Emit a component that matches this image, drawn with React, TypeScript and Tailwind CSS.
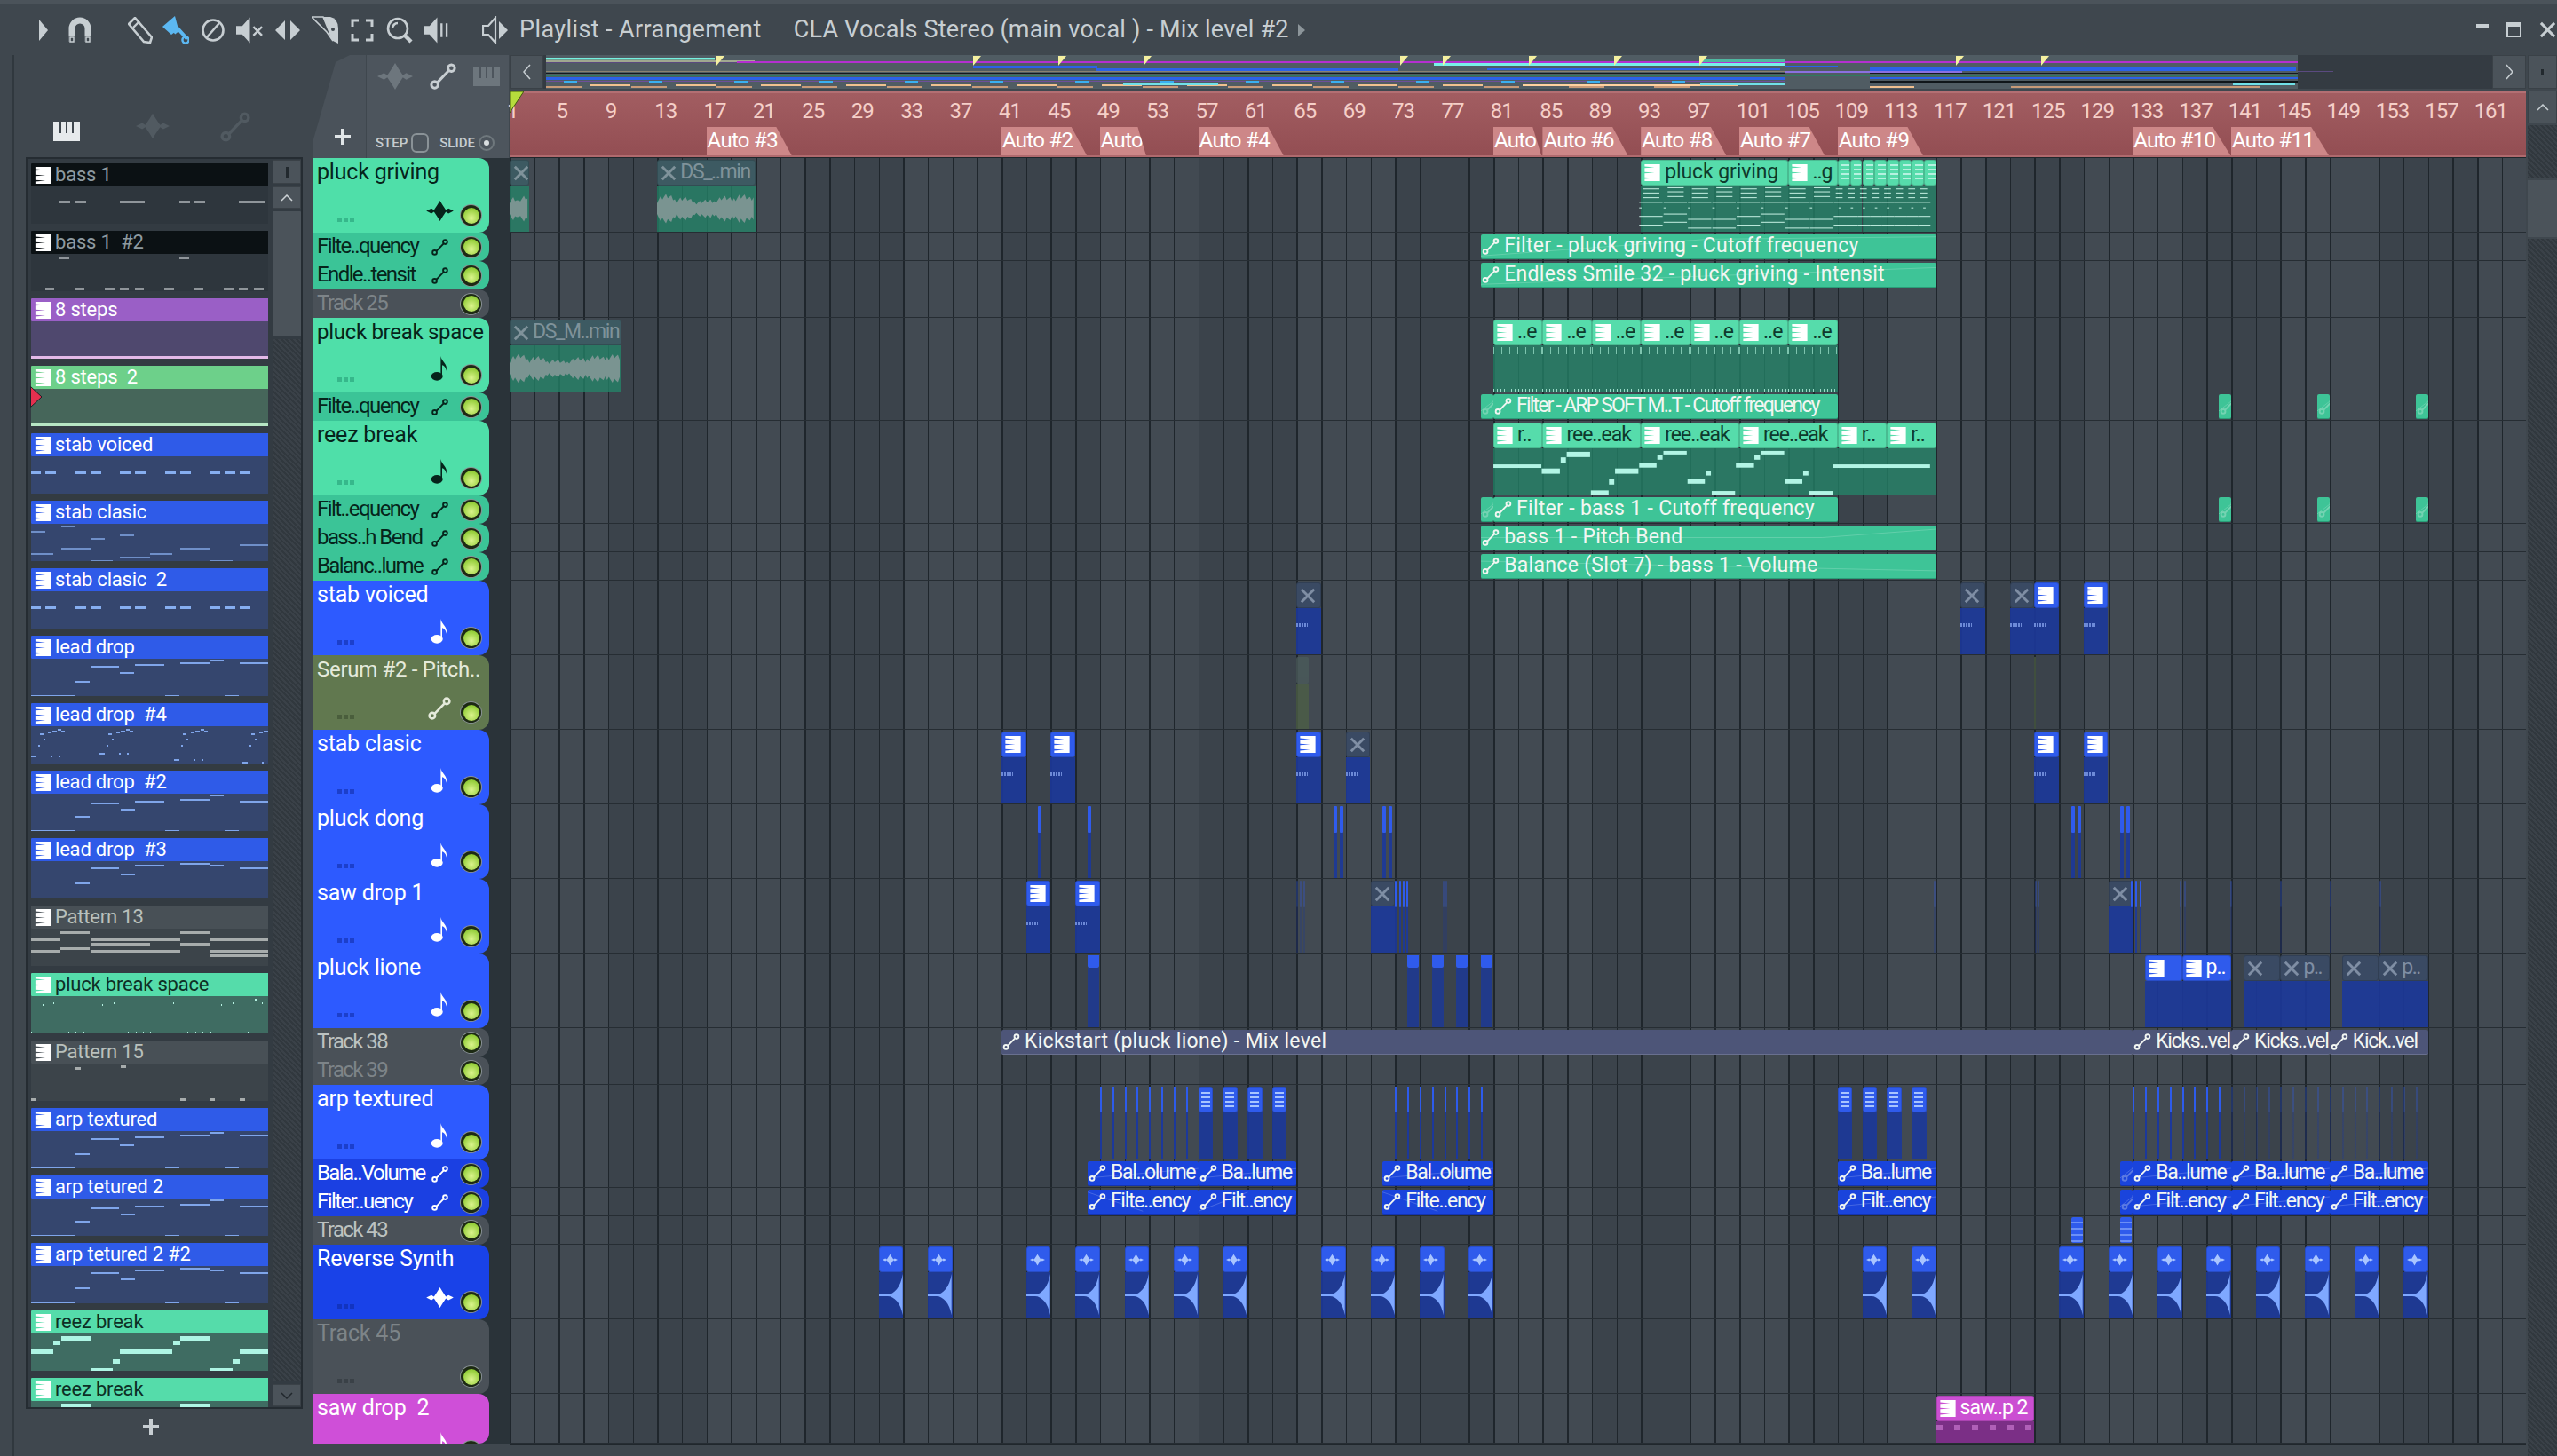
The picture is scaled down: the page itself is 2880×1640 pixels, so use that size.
import type { ReactNode } from "react";

const BAR = 13.85;
const GRID_X = 574;

type Tone = "green" | "blue" | "grey" | "mag";
type Note = [number, number, number, number?];

/* ---------- small drawings ---------- */

function PatIcon({ className = "w-[20px] h-[22px]" }: { className?: string }) {
  return (
    <svg viewBox="0 0 20 22" className={`shrink-0 fill-white ${className}`}>
      <path d="M0 0H20V22H0V19L13 18L0 17V12L13 11L0 10V5L13 4L0 3Z" />
    </svg>
  );
}

function WaveIcon({ className = "" }: { className?: string }) {
  return (
    <svg viewBox="0 0 32 24" className={className} fill="currentColor">
      <path d="M0 12L6 9L9 11L13 5L16 0L19 5L23 11L26 9L32 12L26 15L23 13L19 19L16 24L13 19L9 13L6 15Z" />
    </svg>
  );
}

function NoteIcon({ className = "" }: { className?: string }) {
  return (
    <svg viewBox="0 0 20 30" className={className} fill="currentColor">
      <ellipse cx="7" cy="24.5" rx="7" ry="5.2" />
      <path d="M11.5 25V0C12.5 7 20 9 18.5 18C17.5 13 15 11.5 13.2 11V25Z" />
    </svg>
  );
}

function AutoIcon({ className = "" }: { className?: string }) {
  return (
    <svg viewBox="0 0 24 24" className={className} fill="none" stroke="currentColor" strokeWidth="2.4">
      <circle cx="4.5" cy="19.5" r="3" />
      <circle cx="19.5" cy="4.5" r="3" />
      <path d="M7 17.5L17 7" />
    </svg>
  );
}

function PianoIcon({ className = "" }: { className?: string }) {
  return (
    <svg viewBox="0 0 30 22" className={className} fill="currentColor">
      <path d="M0 0H7V13H9V0H14V13H16V0H21V13H23V0H30V22H0Z" />
    </svg>
  );
}

function CrossIcon({ className = "" }: { className?: string }) {
  return (
    <svg viewBox="0 0 20 20" className={className} fill="none" stroke="currentColor" strokeWidth="3.2">
      <path d="M2 2L18 18M18 2L2 18" />
    </svg>
  );
}

function Led() {
  return (
    <span className="flex h-[23px] w-[23px] shrink-0 items-center justify-center rounded-full bg-[#1d2a14] ring-1 ring-[#8a9296]">
      <span className="h-[18px] w-[18px] rounded-full bg-[radial-gradient(circle_at_50%_65%,#dcf58e,#8fcb34_75%)]" />
    </span>
  );
}

function ToolIcons() {
  return (
    <>
      <svg viewBox="0 0 10 24" className="ml-[44px] h-[24px] w-[10px] fill-[#c7ced2]">
        <path d="M0 0L10 12L0 24Z" />
      </svg>
      <svg viewBox="0 0 28 30" className="ml-[22px] h-[30px] w-[28px]">
        <path d="M5 28V13a9 9 0 0 1 18 0V28" fill="none" stroke="#c7ced2" strokeWidth="7" />
        <path d="M1.5 22h7v6h-7zM19.5 22h7v6h-7z" fill="#3f474e" />
        <path d="M3 23h4v5H3zM21 23h4v5h-4z" fill="none" stroke="#c7ced2" strokeWidth="1.5" />
      </svg>
      <svg viewBox="0 0 28 30" className="ml-[40px] h-[30px] w-[28px]">
        <path d="M1 8L8 1L27 23L25 29L18 28Z" fill="none" stroke="#c7ced2" strokeWidth="2.6" />
        <path d="M6 12L13 5" stroke="#c7ced2" strokeWidth="2.4" />
      </svg>
      <svg viewBox="0 0 30 32" className="ml-[11px] h-[32px] w-[30px]">
        <path d="M0 12L14 0L18 15L10 21Z" fill="#5cb8f2" />
        <path d="M13 19L18 15L28 26" fill="none" stroke="#5cb8f2" strokeWidth="4" />
        <circle cx="26" cy="27" r="3.6" fill="none" stroke="#5cb8f2" strokeWidth="2.4" />
      </svg>
      <svg viewBox="0 0 26 26" className="ml-[14px] h-[26px] w-[26px]" fill="none" stroke="#c7ced2" strokeWidth="2.6">
        <circle cx="13" cy="13" r="11.5" />
        <path d="M6 21L20 5" />
      </svg>
      <svg viewBox="0 0 32 32" className="ml-[13px] h-[32px] w-[31px]">
        <path d="M0 11H7L16 1V31L7 21H0Z" fill="#c7ced2" />
        <path d="M20 12L30 22M30 12L20 22" stroke="#c7ced2" strokeWidth="2.4" />
      </svg>
      <svg viewBox="0 0 30 26" className="ml-[12px] h-[26px] w-[30px] fill-[#c7ced2]">
        <path d="M12 2V24L1 13ZM18 2V24L29 13Z" />
      </svg>
      <svg viewBox="0 0 30 32" className="ml-[12px] h-[32px] w-[30px]">
        <path d="M0 1H13L24 28L17 18Z" fill="none" stroke="#c7ced2" strokeWidth="1.6" />
        <path d="M14 1H21Q30 3 30 14V31L24 28L14 3Z" fill="#c7ced2" />
        <circle cx="24" cy="15" r="2" fill="#3f474e" />
      </svg>
      <svg viewBox="0 0 26 26" className="ml-[14px] h-[26px] w-[26px]" fill="none" stroke="#c7ced2" strokeWidth="3">
        <path d="M9 2H2V9M17 2H24V9M9 24H2V17M17 24H24V17" />
      </svg>
      <svg viewBox="0 0 30 30" className="ml-[14px] h-[30px] w-[30px]" fill="none" stroke="#c7ced2" strokeWidth="2.6">
        <circle cx="13" cy="13" r="11" />
        <path d="M7 13A6 6 0 0 1 13 7" />
        <path d="M21 21L28 28" strokeWidth="4.4" />
      </svg>
      <svg viewBox="0 0 30 32" className="ml-[12px] h-[32px] w-[29px]">
        <path d="M0 11H7L16 1V31L7 21H0Z" fill="#c7ced2" />
        <path d="M21 8V24M27 8V24" stroke="#c7ced2" strokeWidth="2.4" />
      </svg>
      <svg viewBox="0 0 30 32" className="ml-[37px] h-[32px] w-[30px]">
        <path d="M1 11H7L15 2V30L7 21H1Z" fill="none" stroke="#c7ced2" strokeWidth="2.2" />
        <path d="M19 6L29 16L19 26Z" fill="#c7ced2" />
      </svg>
    </>
  );
}

/* ---------- picker ---------- */

const LEAD: Note[] = [
  [67, 99, 8], [50, 66, 25], [100, 116, 15], [117, 150, 6], [168, 201, 4], [201, 217, 1],
  [235, 268, 4], [0, 16, 41], [16, 50, 41], [151, 167, 41], [218, 234, 41],
];
const LEAD2: Note[] = [
  [67, 99, 10], [50, 66, 25], [101, 117, 17], [117, 150, 8], [168, 201, 6], [201, 217, 1],
  [235, 268, 8], [0, 16, 41], [16, 50, 41], [151, 167, 41], [218, 234, 41],
];
const LEAD3: Note[] = [
  [67, 99, 7], [50, 66, 24], [101, 117, 14], [117, 150, 4], [168, 201, 2], [201, 217, 4],
  [235, 268, 7], [0, 16, 41], [16, 50, 41], [151, 167, 41], [218, 234, 41],
];
const DOTS: Note[] = [0, 77, 161, 238].flatMap((o, i) =>
  (
    [
      [10, 14, 8], [19, 23, 6], [24, 29, 5], [30, 34, 3], [34, 38, 5], [14, 16, 14], [8, 10, 21],
      [0, 6, 33], [22, 24, 33], [31, 33, 33],
    ] as Note[]
  ).map((n) => [n[0] + o, Math.min(n[1] + o, 270), n[2] + (n[2] > 25 ? [0, -3, 4, 7][i] : 0), 2] as Note),
);
const STAB: Note[] = [
  [0, 11, 17, 3], [16, 28, 17, 3], [50, 62, 17, 3], [67, 79, 17, 3], [100, 112, 17, 3], [117, 129, 17, 3],
  [151, 163, 17, 3], [168, 180, 17, 3], [202, 213, 17, 3], [218, 230, 17, 3], [235, 247, 17, 3],
];
const REEZ: Note[] = [
  [34, 67, 3, 5], [25, 33, 8, 5], [0, 25, 18, 5], [67, 92, 39, 5], [92, 100, 29, 5], [100, 159, 18, 5],
  [160, 168, 8, 5], [168, 201, 3, 5], [201, 227, 39, 5], [227, 235, 29, 5], [235, 268, 18, 5],
];

const PICKER: { name: string; head: string; body: string; note: string; notes: Note[]; line?: string }[] = [
  {
    name: "bass 1", head: "bg-[#0b1114] text-[#8e9aa0]", body: "bg-[#2e363d]", note: "fill-[#8f959a]",
    notes: [[32, 44, 16, 3], [50, 62, 16, 3], [100, 128, 16, 3], [167, 179, 16, 3], [184, 196, 16, 3], [234, 263, 16, 3]],
  },
  {
    name: "bass 1  #2", head: "bg-[#0b1114] text-[#8e9aa0]", body: "bg-[#2e363d]", note: "fill-[#8f959a]",
    notes: [
      [32, 43, 3, 3], [167, 178, 3, 3], [16, 26, 38, 3], [50, 60, 38, 3], [83, 94, 38, 3], [100, 110, 38, 3], [117, 127, 38, 3],
      [150, 161, 38, 3], [184, 194, 38, 3], [217, 228, 38, 3], [234, 244, 38, 3], [251, 262, 38, 3],
    ],
  },
  { name: "8 steps", head: "bg-[#9a5fc6] text-white", body: "bg-[#4f486e]", note: "", notes: [], line: "bg-[#e3b9e8]" },
  { name: "8 steps  2", head: "bg-[#6dd08a] text-white", body: "bg-[#46665a]", note: "", notes: [], line: "bg-[#b7e6c4]" },
  { name: "stab voiced", head: "bg-[#2f5be8] text-white", body: "bg-[#35466e]", note: "fill-[#86aef0]", notes: STAB },
  {
    name: "stab clasic", head: "bg-[#2f5be8] text-white", body: "bg-[#35466e]", note: "fill-[#6f8fc8]",
    notes: [
      [0, 25, 33], [34, 67, 27], [67, 92, 41], [100, 134, 37], [134, 159, 33], [168, 201, 27], [201, 227, 41, 3], [235, 268, 23],
      [0, 16, 8], [34, 50, 2], [67, 83, 16], [100, 116, 12],
    ],
  },
  { name: "stab clasic  2", head: "bg-[#2f5be8] text-white", body: "bg-[#35466e]", note: "fill-[#86aef0]", notes: STAB },
  { name: "lead drop", head: "bg-[#2f5be8] text-white", body: "bg-[#35466e]", note: "fill-[#7fa5ea]", notes: LEAD },
  { name: "lead drop  #4", head: "bg-[#2f5be8] text-white", body: "bg-[#35466e]", note: "fill-[#7fa5ea]", notes: DOTS },
  { name: "lead drop  #2", head: "bg-[#2f5be8] text-white", body: "bg-[#35466e]", note: "fill-[#7fa5ea]", notes: LEAD2 },
  { name: "lead drop  #3", head: "bg-[#2f5be8] text-white", body: "bg-[#35466e]", note: "fill-[#7fa5ea]", notes: LEAD3 },
  {
    name: "Pattern 13", head: "bg-[#485056] text-[#b9c0bc]", body: "bg-[#3c444a]", note: "fill-[#a7acac]",
    notes: [
      [0, 33, 11, 3], [33, 66, 3, 3], [33, 66, 21, 3], [0, 33, 24, 3], [67, 134, 11, 3], [67, 134, 16, 3], [67, 134, 24, 3],
      [134, 168, 11, 3], [134, 168, 24, 3], [168, 201, 3, 3], [168, 201, 16, 3], [202, 268, 11, 3], [202, 268, 24, 3],
      [202, 268, 29, 3], [0, 268, 42, 3],
    ],
  },
  {
    name: "pluck break space", head: "bg-[#55dcaa] text-[#0d2f25]", body: "bg-[#3f6c62]", note: "fill-[#b6f1e2]",
    notes: [
      [13, 14, 9], [25, 26, 7], [80, 81, 9], [93, 94, 7], [147, 148, 9], [160, 161, 7], [214, 215, 9], [227, 228, 7], [252, 254, 3], [260, 261, 7],
      [0, 1, 40], [42, 43, 40], [50, 51, 40], [59, 60, 40], [67, 68, 40], [109, 110, 40], [118, 119, 40], [126, 127, 40], [134, 135, 40],
      [176, 177, 40], [185, 186, 40], [193, 194, 40], [202, 203, 40], [244, 245, 40],
    ],
  },
  {
    name: "Pattern 15", head: "bg-[#485056] text-[#b9c0bc]", body: "bg-[#3c444a]", note: "fill-[#a7acac]",
    notes: [[50, 56, 4, 3], [101, 107, 2, 3], [0, 6, 39, 3], [168, 174, 39, 3], [201, 207, 39, 3], [235, 241, 39, 3]],
  },
  { name: "arp textured", head: "bg-[#2f5be8] text-white", body: "bg-[#35466e]", note: "fill-[#7fa5ea]", notes: LEAD },
  { name: "arp tetured 2", head: "bg-[#2f5be8] text-white", body: "bg-[#35466e]", note: "fill-[#7fa5ea]", notes: LEAD2 },
  { name: "arp tetured 2 #2", head: "bg-[#2f5be8] text-white", body: "bg-[#35466e]", note: "fill-[#7fa5ea]", notes: LEAD3 },
  { name: "reez break", head: "bg-[#55dcaa] text-[#0d2f25]", body: "bg-[#3f6c62]", note: "fill-[#aef5e4]", notes: REEZ },
  { name: "reez break", head: "bg-[#55dcaa] text-[#0d2f25]", body: "bg-[#3f6c62]", note: "fill-[#aef5e4]", notes: REEZ },
];

function Picker() {
  return (
    <div className="flex w-[336px] flex-col">
      <div className="flex h-[115px] items-end pb-[17px] text-[#e6eaec]">
        <PianoIcon className="ml-[44px] h-[24px] w-[30px]" />
        <WaveIcon className="ml-[63px] h-[36px] w-[38px] text-[#515a61]" />
        <AutoIcon className="ml-[57px] h-[34px] w-[34px] text-[#515a61]" />
      </div>
      <div className="ml-[13px] flex h-[1410px] w-[312px] gap-[5px] border-[2px] border-[#252c32] bg-[#333b42]">
        <div className="flex w-[271px] flex-col overflow-hidden pt-[5px] pl-[4px]">
          {PICKER.map((p, i) => (
            <div key={i} className="relative mb-[8px] h-[68px] w-[270px] shrink-0">
              <div className={`flex h-[26px] items-center gap-[4px] rounded-[1px] pl-[4px] text-[22px] whitespace-pre ${p.head}`}>
                <PatIcon className="h-[19px] w-[19px]" />
                <span className="pb-[1px] tracking-[-0.2px]">{p.name}</span>
              </div>
              <div className={`flex h-[42px] flex-col justify-end overflow-hidden ${p.body}`}>
                {p.notes.length > 0 && (
                  <svg viewBox="0 0 270 42" className={`h-[42px] w-[270px] ${p.note}`}>
                    {p.notes.map((n, j) => (
                      <rect key={j} x={n[0]} width={n[1] - n[0]} y={n[2]} height={n[3] ?? 2} />
                    ))}
                  </svg>
                )}
                {p.line && <span className={`h-[3px] ${p.line}`} />}
              </div>
              {i === 3 && (
                <svg viewBox="0 0 14 24" className="absolute top-[23px] -left-[1px] h-[24px] w-[14px] fill-[#e5304f] stroke-[#1d2226]">
                  <path d="M0.5 0.5L13 12L0.5 23.5Z" />
                </svg>
              )}
            </div>
          ))}
        </div>
        <div className="flex flex-1 flex-col gap-[3px] pt-[1px] pb-[1px]">
          <div className="flex h-[27px] items-center justify-center border border-[#3a4147] bg-[#4b535a]">
            <span className="h-[12px] w-[3px] bg-[#22292e]" />
          </div>
          <div className="flex h-[25px] items-center justify-center border border-[#3a4147] bg-[#4b535a] text-[#cdd3d6]">
            <svg viewBox="0 0 14 8" className="h-[8px] w-[14px]" fill="none" stroke="currentColor" strokeWidth="1.5"><path d="M1 7L7 1L13 7" /></svg>
          </div>
          <div className="h-[141px] rounded-[1px] bg-[#4b535a]" />
          <div className="flex-1 bg-[repeating-linear-gradient(45deg,#31383e_0,#31383e_2px,#3a4148_2px,#3a4148_4px)]" />
          <div className="flex h-[25px] items-center justify-center border border-[#3a4147] bg-[#4b535a] text-[#20272c]">
            <svg viewBox="0 0 14 8" className="h-[8px] w-[14px]" fill="none" stroke="currentColor" strokeWidth="1.5"><path d="M1 1L7 7L13 1" /></svg>
          </div>
        </div>
      </div>
      <div className="ml-[13px] flex w-[312px] pt-[11px] pl-[132px]">
        <svg viewBox="0 0 18 18" className="h-[18px] w-[18px] fill-[#c7ced2]"><path d="M7 0H11V7H18V11H11V18H7V11H0V7H7Z" /></svg>
      </div>
    </div>
  );
}

/* ---------- track headers ---------- */

type Row = { name: string; h: number; bg: string; fg: string; dots?: string; icon?: "wave" | "note" | "auto" };
const G = { bg: "bg-[#4fdfa9]", fg: "text-[#06241b]", dots: "bg-[#36b88b]" };
const GS = { bg: "bg-[#3bc497]", fg: "text-[#06241b]" };
const B = { bg: "bg-[#2d5aff]", fg: "text-white", dots: "bg-[#1c3fcb]" };
const BS = { bg: "bg-[#1b40e2]", fg: "text-white" };

const ROWS: Row[] = [
  { name: "pluck griving", h: 84, ...G, icon: "wave" },
  { name: "Filte..quency", h: 32, ...GS, icon: "auto" },
  { name: "Endle..tensit", h: 32, ...GS, icon: "auto" },
  { name: "Track 25", h: 32, bg: "bg-[#4a5158]", fg: "text-[#7d8488]" },
  { name: "pluck break space", h: 84, ...G, icon: "note" },
  { name: "Filte..quency", h: 32, ...GS, icon: "auto" },
  { name: "reez break", h: 84, ...G, icon: "note" },
  { name: "Filt..equency", h: 32, ...GS, icon: "auto" },
  { name: "bass..h Bend", h: 32, ...GS, icon: "auto" },
  { name: "Balanc..lume", h: 32, ...GS, icon: "auto" },
  { name: "stab voiced", h: 84, ...B, icon: "note" },
  { name: "Serum #2 - Pitch..", h: 84, bg: "bg-[#61784f]", fg: "text-[#e5eadb]", dots: "bg-[#4a5e3c]", icon: "auto" },
  { name: "stab clasic", h: 84, ...B, icon: "note" },
  { name: "pluck dong", h: 84, ...B, icon: "note" },
  { name: "saw drop 1", h: 84, ...B, icon: "note" },
  { name: "pluck lione", h: 84, ...B, icon: "note" },
  { name: "Track 38", h: 32, bg: "bg-[#4a5158]", fg: "text-[#bcc2c0]" },
  { name: "Track 39", h: 32, bg: "bg-[#4a5158]", fg: "text-[#7d8488]" },
  { name: "arp textured", h: 84, ...B, icon: "note" },
  { name: "Bala..Volume", h: 32, ...BS, icon: "auto" },
  { name: "Filter..uency", h: 32, ...BS, icon: "auto" },
  { name: "Track 43", h: 32, bg: "bg-[#4a5158]", fg: "text-[#bcc2c0]" },
  { name: "Reverse Synth", h: 84, bg: "bg-[#1942e8]", fg: "text-white", dots: "bg-[#1234c0]", icon: "wave" },
  { name: "Track 45", h: 84, bg: "bg-[#4a5158]", fg: "text-[#7d8488]", dots: "bg-[#3a4147]" },
  { name: "saw drop  2", h: 56, bg: "bg-[#cf4fd8]", fg: "text-white", dots: "bg-[#a83db0]", icon: "note" },
];

function RowIcon({ kind, big }: { kind?: Row["icon"]; big: boolean }) {
  if (kind === "wave") return <WaveIcon className="h-[23px] w-[31px]" />;
  if (kind === "note") return <NoteIcon className="h-[28px] w-[20px]" />;
  if (kind === "auto") return <AutoIcon className={big ? "h-[26px] w-[30px]" : "h-[19px] w-[24px]"} />;
  return null;
}

function TrackHead({ row }: { row: Row }) {
  if (row.h === 32) {
    return (
      <div className="h-[32px] bg-[#2a3339]">
        <div className={`flex h-full w-[199px] items-center rounded-r-[12px] pr-[9px] pl-[5px] whitespace-pre ${row.bg} ${row.fg}`}>
          <span className="flex-1 pb-[2px] text-[24px] tracking-[-1.6px]">{row.name}</span>
          <span className="flex w-[26px] justify-center pr-[3px]">
            <RowIcon kind={row.icon} big={false} />
          </span>
          <span className="ml-[9px]"><Led /></span>
        </div>
      </div>
    );
  }
  const long = row.name.length > 14;
  return (
    <div className="bg-[#2a3339]" style={{ height: row.h }}>
      <div className={`flex h-full w-[199px] flex-col overflow-hidden rounded-r-[12px] pl-[5px] whitespace-pre ${row.bg} ${row.fg}`}>
        <span className={`h-[34px] shrink-0 pt-[1px] leading-[30px] ${long ? "text-[24px] tracking-[-0.3px]" : "text-[25px] tracking-[-0.2px]"}`}>
          {row.name}
        </span>
        <div className="flex h-[50px] shrink-0 items-end pr-[9px] pb-[8px]">
          <span className="mb-[4px] ml-[23px] flex gap-[2px]">
            <i className={`h-[5px] w-[5px] ${row.dots}`} />
            <i className={`h-[5px] w-[5px] ${row.dots}`} />
            <i className={`h-[5px] w-[5px] ${row.dots}`} />
          </span>
          <span className={`ml-auto flex w-[32px] justify-center ${row.icon === "auto" ? "mb-[3px]" : "mb-[5px]"}`}>
            <RowIcon kind={row.icon} big />
          </span>
          <span className="ml-[8px]"><Led /></span>
        </div>
      </div>
    </div>
  );
}

/* ---------- playlist clips ---------- */

const HEAD: Record<Tone, string> = {
  green: "bg-[#56dcab] text-[#0e3a2d]",
  blue: "bg-[#2f5bec] text-white",
  grey: "bg-[#4a5270] text-white",
  mag: "bg-[#cb4fd2] text-white",
};
const BODY: Record<Tone, string> = {
  green: "bg-[#24876a]/75",
  blue: "bg-[#1c389a]/90",
  grey: "bg-[#4a5270]",
  mag: "bg-[#7b2f86]",
};
const AUTO: Record<Tone, string> = {
  green: "bg-[#3ec497] border-[#2a9e78]",
  blue: "bg-[#1a44dc] border-[#1434b0]",
  grey: "bg-[#4d5578] border-[#69708f]",
  mag: "bg-[#cb4fd2] border-[#a83db0]",
};

function Pattern({
  s, e, tone = "blue", label, muted, head, ticks, children,
}: {
  s: number; e: number; tone?: Tone; label?: string; muted?: boolean; head?: ReactNode; ticks?: boolean; children?: ReactNode;
}) {
  const width = (e - s) * BAR;
  const spread = (label?.length ?? 0) > 10;
  return (
    <div className="absolute top-[2px] bottom-0 flex flex-col" style={{ left: s * BAR, width }}>
      <div
        className={`flex h-[29px] shrink-0 items-center overflow-hidden rounded-[3px] border border-black/15 pl-[3px] text-[23px] whitespace-pre ${
          spread ? "tracking-[-0.1px]" : muted ? "tracking-[-1.4px]" : "tracking-[-1px]"
        } ${muted ? (tone === "green" ? "bg-[#3d5a62] text-[#7f929a]" : "bg-[#3a4a63] text-[#7f8ea4]") : HEAD[tone]}`}
      >
        {head ?? (muted ? <CrossIcon className="h-[18px] w-[18px] shrink-0" /> : width > 20 ? <PatIcon className="h-[19px] w-[18px]" /> : null)}
        {label && <span className={muted ? "pl-[4px]" : "pl-[5px]"}>{label}</span>}
      </div>
      <div className={`relative flex-1 overflow-hidden ${BODY[tone]}`}>
        {ticks && (
          <span className="absolute top-[17px] left-0 h-[4px] w-[13px] bg-[repeating-linear-gradient(90deg,#6d8ad8_0,#6d8ad8_2px,transparent_2px,transparent_3px)]" />
        )}
        {children}
      </div>
    </div>
  );
}

function Auto({
  s, e, tone = "green", label, curve = "M0 70L100 30", tight,
}: {
  s: number; e: number; tone?: Tone; label?: string; curve?: string; tight?: boolean;
}) {
  const width = (e - s) * BAR;
  const long = (label?.length ?? 0) > 15;
  return (
    <div
      className={`absolute top-[2px] bottom-[1px] flex items-center overflow-hidden rounded-[2px] border-b pl-[1px] text-[23px] whitespace-pre text-[#f2f6f2] ${
        tight ? "tracking-[-1.8px]" : long ? "tracking-[0.3px]" : "tracking-[-1.3px]"
      } ${AUTO[tone]}`}
      style={{ left: s * BAR, width }}
    >
      <svg viewBox="0 0 100 100" preserveAspectRatio="none" className="absolute inset-0 h-full w-full" fill="none" stroke="#ffffff30">
        <path d={curve} vectorEffect="non-scaling-stroke" />
      </svg>
      <AutoIcon className={`relative h-[19px] w-[20px] shrink-0 ${width < 25 ? "opacity-30" : ""}`} />
      {label && <span className="relative pl-[5px]">{label}</span>}
    </div>
  );
}

/* thin slivers of a clip, given by page x */
function Thin({ x, w = 4, tone = "blue", faint }: { x: number; w?: number; tone?: Tone; faint?: boolean }) {
  return (
    <div className={`absolute top-[2px] bottom-0 flex flex-col ${faint ? "opacity-30" : ""}`} style={{ left: x - GRID_X, width: w }}>
      <div className={`h-[30px] shrink-0 rounded-[1px] ${HEAD[tone]}`} />
      <div className={`flex-1 ${BODY[tone]}`} />
    </div>
  );
}

function Wave() {
  return (
    <svg viewBox="0 0 28 54" preserveAspectRatio="none" className="absolute inset-0 h-full w-full fill-[#7fa8ff]">
      <path d="M0 26H10C17 26 25 17 27 2V50C25 36 17 28 10 28H0Z" />
    </svg>
  );
}

function RevClip({ s }: { s: number }) {
  return (
    <Pattern s={s} e={s + 2} tone="blue" head={<WaveIcon className="h-[16px] w-[17px] shrink-0 text-[#a9c5ff]" />}>
      <Wave />
    </Pattern>
  );
}

function Sample({ w }: { w: number }) {
  const pts = Array.from({ length: Math.round(w / 2) }, (_, i) => {
    const lump = 0.55 + 0.45 * Math.abs(Math.cos((i * 2 * Math.PI) / (w / 1.1)));
    const a = (9 + ((i * 37) % 11) + 7 * Math.abs(Math.sin(i * 0.3))) * lump;
    return [i * 2, a] as const;
  });
  const top = pts.map(([x, a]) => `${x},${27 - a * 0.7}`).join(" ");
  const bot = pts.map(([x, a]) => `${x},${27 + a * 0.7}`).reverse().join(" ");
  return (
    <svg viewBox={`0 0 ${w} 54`} preserveAspectRatio="none" className="absolute inset-0 h-full w-full fill-[#7a9491]">
      <polygon points={`${top} ${bot}`} />
    </svg>
  );
}

/* notes drawn over whole rows, given in page pixels */
function Notes({ top, height, items, color }: { top: number; height: number; items: [number, number, number, number][]; color: string }) {
  return (
    <svg viewBox={`${GRID_X} ${top} 2271 ${height}`} className={`pointer-events-none absolute inset-0 h-full w-full ${color}`}>
      {items.map(([x1, x2, y, h], i) => (
        <rect key={i} x={x1} width={x2 - x1} y={y} height={h} />
      ))}
    </svg>
  );
}

const z = (v: number) => 1600 + v / 2.178;
const zy = (v: number) => 140 + v / 3;

const REEZ_NOTES = (
  [
    [178, 297, 1151, 4], [298, 343, 1165, 6], [345, 358, 1127, 6], [360, 418, 1108, 6], [420, 464, 1240, 6], [465, 478, 1202, 6],
    [480, 538, 1165, 6], [540, 583, 1147, 5], [585, 598, 1120, 5], [600, 658, 1105, 4], [660, 703, 1202, 5], [705, 718, 1174, 5],
    [720, 778, 1242, 4], [780, 825, 1147, 5], [826, 840, 1120, 5], [842, 900, 1105, 4], [902, 945, 1202, 5], [947, 960, 1174, 5],
    [962, 1020, 1242, 4], [1022, 1262, 1151, 4],
  ] as [number, number, number, number][]
).map(([a, b, y, h]) => [z(a), z(b), zy(y), h] as [number, number, number, number]);

const GRIVING_NOTES = (() => {
  const out: [number, number, number, number][] = [];
  for (let i = 0; i < 8; i++) {
    const a = 540 + i * 60.5;
    const b = a + 58;
    const d = i % 2 ? -4 : 0;
    [218, 232, 248].forEach((y) => out.push([z(a + 10), z(b - 8), zy(y + d), 1]));
    out.push([z(a), z(b), zy(264), 1]);
    out.push([z(a), z(a + 6), zy(283), 1]);
    out.push([z(a), z(b), zy(i % 4 < 2 ? (i % 2 ? 304 : 312) : 322), 1]);
    out.push([z(a), z(b), zy(i % 4 < 2 ? (i % 2 ? 332 : 342) : 352), 1]);
  }
  for (let i = 0; i < 8; i++) {
    const a = 1023 + i * 30;
    [218, 232, 248].forEach((y) => out.push([z(a + 5), z(a + 22), zy(y), 1]));
    out.push([z(a), z(a + 30), zy(264), 1]);
    out.push([z(a + 12), z(a + 18), zy(283), 1]);
    out.push([z(a), z(a + 30), zy(312), 1]);
    out.push([z(a), z(a + 30), zy(342), 1]);
  }
  return out;
})();

const KICK = (
  <>
    <Auto s={40} e={132} tone="grey" label="Kickstart (pluck lione) - Mix level" curve="" />
    <Auto s={132} e={140} tone="grey" label="Kicks..vel" curve="" />
    <Auto s={140} e={148} tone="grey" label="Kicks..vel" curve="" />
    <Auto s={148} e={156} tone="grey" label="Kick..vel" curve="" />
  </>
);

function hairlines(from: number, to: number, faintFrom = Infinity) {
  const out: ReactNode[] = [];
  for (let i = from; i < to; i++) {
    out.push(
      <div
        key={i}
        className={`absolute top-[2px] bottom-0 w-[2px] bg-[linear-gradient(#2d5bec_0,#2d5bec_36%,#1c389a_36%,#1c389a_100%)] ${i >= faintFrom ? "opacity-30" : ""}`}
        style={{ left: i * BAR }}
      />,
    );
  }
  return out;
}

const BLUE_SMALL = [56, 58, 60, 62, 108, 110, 112, 114];
const STRIPES_GREEN = <span className="h-[20px] w-[12px] bg-[repeating-linear-gradient(#b6f1e0_0,#b6f1e0_2px,transparent_2px,transparent_5px)]" />;
const STRIPES_BLUE = <span className="ml-[-1px] h-[17px] w-[10px] bg-[repeating-linear-gradient(#a8c4ff_0,#a8c4ff_2px,transparent_2px,transparent_5px)]" />;

const CLIPS: Record<number, ReactNode> = {
  0: (
    <>
      <Pattern s={0} e={1.6} tone="green" muted><Sample w={22} /></Pattern>
      <Pattern s={12} e={20} tone="green" muted label="DS_..min"><Sample w={110} /></Pattern>
      <Pattern s={92} e={104} tone="green" label="pluck griving" />
      <Pattern s={104} e={108} tone="green" label="..g" />
      {[108, 109, 110, 111, 112, 113, 114, 115].map((s) => (
        <Pattern key={s} s={s} e={s + 1} tone="green" head={STRIPES_GREEN} />
      ))}
      <Notes top={178} height={84} items={GRIVING_NOTES} color="fill-[#c9f3e6]" />
    </>
  ),
  1: <Auto s={79} e={116} label="Filter - pluck griving - Cutoff frequency" curve="M0 90L50 20L100 10" />,
  2: <Auto s={79} e={116} label="Endless Smile 32 - pluck griving - Intensit" curve="M0 90L100 20" />,
  4: (
    <>
      <Pattern s={0} e={9.1} tone="green" muted label="DS_M..min"><Sample w={124} /></Pattern>
      {[80, 84, 88, 92, 96, 100, 104].map((s) => (
        <Pattern key={s} s={s} e={s + 4} tone="green" label="..e">
          <span className="absolute top-[2px] left-0 h-[8px] w-full bg-[repeating-linear-gradient(90deg,#7dc4ae_0,#7dc4ae_1px,transparent_1px,transparent_9px)]" />
          <span className="absolute bottom-0 left-0 h-[3px] w-full bg-[repeating-linear-gradient(90deg,#9bdac8_0,#9bdac8_1px,transparent_1px,transparent_4px)]" />
        </Pattern>
      ))}
    </>
  ),
  5: (
    <>
      <Auto s={79} e={80} />
      <Auto s={80} e={108} label="Filter - ARP SOFT M..T - Cutoff frequency" curve="" tight />
      {[139, 147, 155].map((s) => <Auto key={s} s={s} e={s + 1} />)}
    </>
  ),
  6: (
    <>
      <Pattern s={80} e={84} tone="green" label="r.." />
      <Pattern s={84} e={92} tone="green" label="ree..eak" />
      <Pattern s={92} e={100} tone="green" label="ree..eak" />
      <Pattern s={100} e={108} tone="green" label="ree..eak" />
      <Pattern s={108} e={112} tone="green" label="r.." />
      <Pattern s={112} e={116} tone="green" label="r.." />
      <Notes top={474} height={84} items={REEZ_NOTES} color="fill-[#b2f5e5]" />
    </>
  ),
  7: (
    <>
      <Auto s={79} e={80} />
      <Auto s={80} e={108} label="Filter - bass 1 - Cutoff frequency" curve="" />
      {[139, 147, 155].map((s) => <Auto key={s} s={s} e={s + 1} />)}
    </>
  ),
  8: <Auto s={79} e={116} label="bass 1 - Pitch Bend" curve="M0 50L75 50L100 15" />,
  9: <Auto s={79} e={116} label="Balance (Slot 7) - bass 1 - Volume" curve="M0 30L100 70" />,
  10: (
    <>
      <Pattern s={64} e={66} muted ticks />
      <Pattern s={118} e={120} muted ticks />
      <Pattern s={122} e={124} muted ticks />
      <Pattern s={124} e={126} ticks />
      <Pattern s={128} e={130} ticks />
    </>
  ),
  11: (
    <>
      <div className="absolute top-[2px] bottom-0 flex w-[14px] flex-col opacity-80" style={{ left: 64 * BAR }}>
        <div className="h-[30px] rounded-[2px] bg-[#4a5a5a]" />
        <div className="flex-1 bg-[#4c5f46]" />
      </div>
      <div className="absolute top-[2px] bottom-0 flex w-[2px] flex-col opacity-50" style={{ left: 124 * BAR }}>
        <div className="flex-1 bg-[#61784f]" />
      </div>
    </>
  ),
  12: (
    <>
      <Pattern s={40} e={42} ticks />
      <Pattern s={44} e={46} ticks />
      <Pattern s={64} e={66} ticks />
      <Pattern s={68} e={70} muted ticks />
      <Pattern s={124} e={126} ticks />
      <Pattern s={128} e={130} ticks />
    </>
  ),
  13: (
    <>
      {[1169, 1225, 1502, 1509, 1557, 1564, 2333, 2340, 2388, 2395].map((x) => <Thin key={x} x={x} />)}
    </>
  ),
  14: (
    <>
      <Pattern s={42} e={44} ticks />
      <Pattern s={46} e={48} ticks />
      {[1460, 1464, 1468].map((x) => <Thin key={x} x={x} w={2} faint />)}
      <Pattern s={70} e={72} muted />
      {[1571, 1576, 1580, 1584].map((x) => <Thin key={x} x={x} w={2} />)}
      {[1625, 1628].map((x) => <Thin key={x} x={x} w={2} faint />)}
      <Pattern s={130} e={132} muted />
      {[2400, 2405, 2410].map((x) => <Thin key={x} x={x} w={2} />)}
      {[2178, 2292, 2295, 2455, 2460, 2512, 2568, 2624, 2680].map((x) => <Thin key={x} x={x} w={2} faint />)}
    </>
  ),
  15: (
    <>
      {[47, 73, 75, 77, 79].map((s) => (
        <div key={s} className="absolute top-[2px] bottom-0 flex w-[13px] flex-col" style={{ left: s * BAR }}>
          <div className="h-[14px] rounded-b-[2px] bg-[#2f5bec]" />
          <div className="flex-1 bg-[#1c389a]/80" />
        </div>
      ))}
      <Pattern s={133} e={136} />
      <Pattern s={136} e={140} label="p.." />
      <Pattern s={141} e={144} muted />
      <Pattern s={144} e={148} muted label="p.." />
      <Pattern s={149} e={152} muted />
      <Pattern s={152} e={156} muted label="p.." />
    </>
  ),
  16: KICK,
  18: (
    <>
      {hairlines(48, 56)}
      {hairlines(72, 80)}
      {hairlines(132, 156, 140)}
      {BLUE_SMALL.map((s) => (
        <Pattern key={s} s={s} e={s + 1.2} head={STRIPES_BLUE} />
      ))}
    </>
  ),
  19: (
    <>
      <Auto s={47} e={56} tone="blue" label="Bal..olume" />
      <Auto s={56} e={64} tone="blue" label="Ba..lume" />
      <Auto s={71} e={80} tone="blue" label="Bal..olume" />
      <Auto s={108} e={116} tone="blue" label="Ba..lume" />
      <Auto s={131} e={132} tone="blue" />
      <Auto s={132} e={140} tone="blue" label="Ba..lume" />
      <Auto s={140} e={148} tone="blue" label="Ba..lume" />
      <Auto s={148} e={156} tone="blue" label="Ba..lume" />
    </>
  ),
  20: (
    <>
      <Auto s={47} e={56} tone="blue" label="Filte..ency" curve="M0 10L50 90" />
      <Auto s={56} e={64} tone="blue" label="Filt..ency" curve="M0 90L50 10" />
      <Auto s={71} e={80} tone="blue" label="Filte..ency" curve="M0 10L50 90" />
      <Auto s={108} e={116} tone="blue" label="Filt..ency" />
      <Auto s={131} e={132} tone="blue" />
      <Auto s={132} e={140} tone="blue" label="Filt..ency" />
      <Auto s={140} e={148} tone="blue" label="Filt..ency" />
      <Auto s={148} e={156} tone="blue" label="Filt..ency" />
    </>
  ),
  21: (
    <>
      {[127, 131].map((s) => (
        <div key={s} className="absolute top-[1px] bottom-[1px] w-[13px] rounded-[2px] bg-[#2f5bec] bg-[repeating-linear-gradient(transparent_0,transparent_5px,#a8c4ff80_5px,#a8c4ff80_7px)]" style={{ left: s * BAR }} />
      ))}
    </>
  ),
  22: (
    <>
      {[30, 34, 42, 46, 50, 54, 58, 66, 70, 74, 78, 110, 114, 126, 130, 134, 138, 142, 146, 150, 154].map((s) => (
        <RevClip key={s} s={s} />
      ))}
    </>
  ),
  24: (
    <Pattern s={116} e={124} tone="mag" label="saw..p 2">
      <span className="absolute top-[4px] left-0 h-[6px] w-full bg-[repeating-linear-gradient(90deg,#b060b8_0,#b060b8_7px,transparent_7px,transparent_20px)]" />
    </Pattern>
  ),
};

/* ---------- overview strip ---------- */

function Overview() {
  const rects: [number, number, number, number, string][] = [];
  const add = (x: number, w: number, y: number, h: number, c: string) => rects.push([x, y, w, h, c]);
  // x is page x minus 615, y is page y minus 62
  add(0, 1973, 0, 38, "#505c63");
  add(0, 190, 3, 2, "#77f0e0");
  add(0, 190, 5, 2, "#6aa090");
  add(0, 235, 6, 2, "#a0a890");
  add(0, 240, 8, 1, "#5a4a80");
  add(215, 1758, 7, 2, "#b52fd0");
  add(1000, 395, 9, 3, "#77f0e8");
  add(1300, 95, 5, 3, "#4fb8a0");
  add(0, 1395, 18, 1, "#8a8270");
  add(0, 1395, 20, 1, "#14191d");
  add(1491, 482, 20, 1, "#14191d");
  add(0, 1973, 22, 2, "#2e7a60");
  add(0, 1395, 25, 3, "#2b62e8");
  add(1395, 200, 18, 2, "#8a70e0");
  add(1491, 482, 25, 2, "#2b62e8");
  add(0, 1395, 29, 1, "#6d4f9a");
  add(0, 1395, 31, 1, "#10161a");
  add(1491, 482, 29, 2, "#10161a");
  for (let i = 0; i < 14; i++) {
    const x = 96 * i;
    add(x, 40, 35, 2, "#c89a78");
    add(x + 50, 45, 33, 2, "#f0c090");
    add(x + 20, 15, 29, 2, "#3ab0f0");
  }
  add(1491, 50, 35, 2, "#f0c090");
  add(1650, 280, 35, 2, "#c89a78");
  add(481, 140, 12, 3, "#2b62e8");
  add(620, 340, 15, 3, "#2b62e8");
  add(1060, 330, 15, 2, "#2b62e8");
  add(1395, 60, 12, 2, "#2b62e8");
  add(1491, 480, 13, 5, "#2b62e8");
  add(1300, 95, 31, 3, "#70e0e8");
  add(650, 107, 31, 3, "#70e0e8");
  add(1100, 200, 33, 2, "#ffd0a0");
  add(1900, 70, 31, 3, "#70e0e8");
  add(1973, 40, 18, 1, "#5a4a80");
  const marks = [192, 481, 577, 673, 962, 1010, 1107, 1203, 1299, 1588, 1684];
  return (
    <svg viewBox="0 0 2192 38" className="h-[38px] flex-1">
      {rects.map(([x, y, w, h, c], i) => (
        <rect key={i} x={x} y={y} width={w} height={h} fill={c} />
      ))}
      {marks.map((x) => (
        <path key={x} d={`M${x} 1h9l-9 11z`} fill="#f5f0a0" />
      ))}
    </svg>
  );
}

/* ---------- ruler ---------- */

const LOOPS: [number, string, number][] = [
  [16, "Auto #3", 96], [40, "Auto #2", 96], [48, "Auto", 52], [56, "Auto #4", 96], [80, "Auto", 54], [84, "Auto #6", 96],
  [92, "Auto #8", 96], [100, "Auto #7", 96], [108, "Auto #9", 96], [132, "Auto #10", 110], [140, "Auto #11", 110],
];

function Ruler() {
  const bars = Array.from({ length: 41 }, (_, i) => i * 4 + 1);
  return (
    <div className="relative mt-[2px] flex h-[75px] flex-col border-t-[3px] border-b-[2px] border-t-[#b36f73] border-b-[#b06a6e] bg-[linear-gradient(#a25d61,#934e53)]">
      <div className="flex h-[40px] items-center text-[24px] tracking-[-1px] text-[#f5cfc8]">
        {bars.map((b) => (
          <span key={b} className="w-[55.4px] shrink-0 -translate-x-[3px]">{b}</span>
        ))}
      </div>
      {LOOPS.map(([s, label, w]) => (
        <div
          key={label + s}
          className="absolute bottom-0 flex h-[32px] items-center bg-[#cd8788] pb-[2px] pl-[1px] text-[24px] tracking-[-0.7px] text-white [clip-path:polygon(0_0,82%_0,100%_100%,0_100%)]"
          style={{ left: s * BAR, width: w }}
        >
          {label}
        </div>
      ))}
      <svg viewBox="0 0 16 26" className="absolute -top-[3px] left-0 h-[26px] w-[16px]">
        <path d="M0 1H16L0 25Z" fill="#b6dd3c" stroke="#3f5a10" />
      </svg>
    </div>
  );
}

export default function App() {
  return (
    <div className="flex h-[1640px] w-[2880px] flex-col overflow-hidden bg-[#3f474e] [font-family:Roboto,sans-serif]">
      <div className="h-[5px] border-b border-[#2a3137] bg-[#4b535a]" />
      <div className="flex h-[57px] items-center text-[27px] text-[#c7ced2]">
        <ToolIcons />
        <span className="ml-[12px] tracking-[0.4px]">Playlist - Arrangement</span>
        <span className="ml-[36px] tracking-[0.2px]">CLA Vocals Stereo (main vocal ) - Mix level #2</span>
        <svg viewBox="0 0 8 14" className="ml-[10px] h-[14px] w-[8px] fill-[#8c959a]"><path d="M0 0L8 7L0 14Z" /></svg>
        <div className="ml-auto flex items-center gap-[20px] pr-[1px]">
          <span className="mb-[8px] h-[5px] w-[14px] bg-[#c7ced2]" />
          <span className="h-[17px] w-[17px] border-[2px] border-t-[5px] border-[#c7ced2]" />
          <CrossIcon className="h-[19px] w-[19px]" />
        </div>
      </div>
      <div className="flex flex-1">
        <div className="w-[16px] border-r-[2px] border-[#30383e]" />
        <Picker />
        <div className="flex w-[222px] flex-col">
          <div className="flex h-[116px] gap-[1px]">
            <div className="flex w-[60px] items-end justify-end bg-[#4a525a] pr-[17px] pb-[15px] [clip-path:polygon(0_100%,0_85%,26px_8px,42px_0,100%_0,100%_100%)]">
              <svg viewBox="0 0 18 18" className="h-[18px] w-[18px] fill-[#dfe4e6]"><path d="M7 0H11V7H18V11H11V18H7V11H0V7H7Z" /></svg>
            </div>
            <div className="flex w-[160px] flex-col justify-between bg-[#4d555d] px-[10px] pt-[6px] pb-[6px] text-[#6d767d]">
              <div className="flex items-center justify-between pl-[2px]">
                <WaveIcon className="h-[36px] w-[40px]" />
                <AutoIcon className="h-[30px] w-[34px] text-[#c8ced2]" />
                <PianoIcon className="h-[24px] w-[30px]" />
              </div>
              <div className="flex items-center gap-[4px] text-[15px] font-medium text-[#c6ccd0]">
                <span>STEP</span>
                <span className="h-[22px] w-[20px] rounded-[6px] border-[2px] border-[#8a9297]" />
                <span className="ml-[8px]">SLIDE</span>
                <span className="flex h-[18px] w-[18px] items-center justify-center rounded-full border-[2px] border-[#6f787d]">
                  <i className="h-[6px] w-[6px] rounded-full bg-[#d9dee0]" />
                </span>
              </div>
            </div>
          </div>
          {ROWS.map((r, i) => <TrackHead key={i} row={r} />)}
        </div>
        <div className="flex w-[2271px] flex-col">
          <div className="flex h-[38px] items-stretch bg-[#343b42]">
            <div className="flex w-[38px] items-center justify-center border border-[#3a4147] bg-[#4b535a] text-[#c7ced2]">
              <svg viewBox="0 0 9 18" className="h-[18px] w-[9px]" fill="none" stroke="currentColor" strokeWidth="1.5"><path d="M8 1L1 9L8 17" /></svg>
            </div>
            <div className="w-[3px]" />
            <Overview />
            <div className="flex w-[38px] items-center justify-center border border-[#3a4147] bg-[#4b535a] text-[#c7ced2]">
              <svg viewBox="0 0 9 18" className="h-[18px] w-[9px]" fill="none" stroke="currentColor" strokeWidth="1.5"><path d="M1 1L8 9L1 17" /></svg>
            </div>
          </div>
          <Ruler />
          <div className="h-[1px] bg-[#20272c]" />
          <div className="border-b-[2px] border-[#20272c] bg-[image:repeating-linear-gradient(90deg,#1f262c_0,#1f262c_1.5px,transparent_1.5px,transparent_27.7px),repeating-linear-gradient(90deg,#424a52_0,#424a52_110.8px,#3b434b_110.8px,#3b434b_221.6px)]">
            {ROWS.map((r, i) => (
              <div key={i} className="relative border-b border-[#262d33]" style={{ height: r.h }}>
                {CLIPS[i]}
              </div>
            ))}
          </div>
        </div>
        <div className="flex flex-1 flex-col gap-[2px] pl-[2px]">
          <div className="flex h-[38px] items-center justify-center border border-[#3a4147] bg-[#4b535a]">
            <span className="h-[6px] w-[3px] bg-[#22292e]" />
          </div>
          <div className="flex h-[37px] items-center justify-center border border-[#3a4147] bg-[#4b535a] text-[#c7ced2]">
            <svg viewBox="0 0 14 8" className="h-[8px] w-[14px]" fill="none" stroke="currentColor" strokeWidth="1.5"><path d="M1 7L7 1L13 7" /></svg>
          </div>
          <div className="h-[60px] bg-[repeating-linear-gradient(45deg,#31383e_0,#31383e_2px,#3a4148_2px,#3a4148_4px)]" />
          <div className="h-[64px] bg-[#4b535a]" />
          <div className="flex-1 bg-[repeating-linear-gradient(45deg,#31383e_0,#31383e_2px,#3a4148_2px,#3a4148_4px)]" />
        </div>
      </div>
    </div>
  );
}
